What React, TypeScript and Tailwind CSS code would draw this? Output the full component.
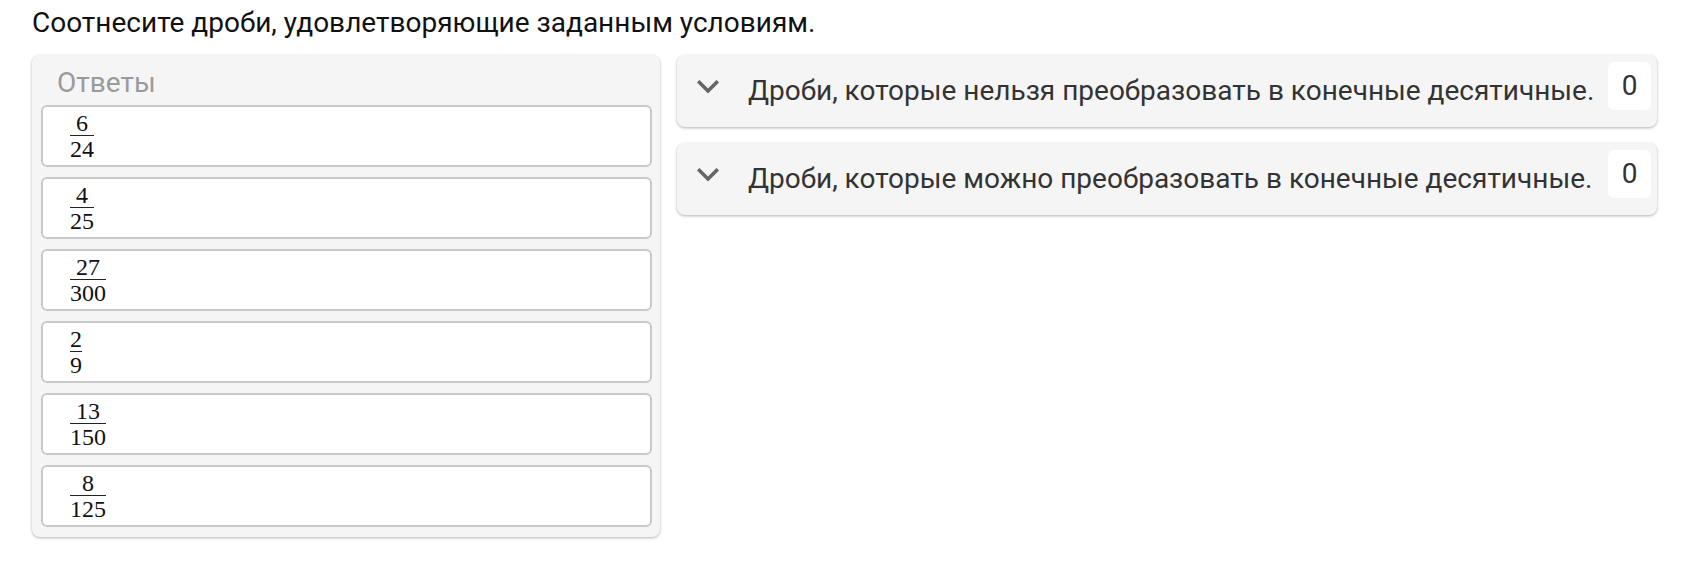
import React from 'react';

interface Fraction {
  num: string;
  den: string;
}

const answers: Fraction[] = [
  { num: '6', den: '24' },
  { num: '4', den: '25' },
  { num: '27', den: '300' },
  { num: '2', den: '9' },
  { num: '13', den: '150' },
  { num: '8', den: '125' },
];

const categories = [
  'Дроби, которые нельзя преобразовать в конечные десятичные.',
  'Дроби, которые можно преобразовать в конечные десятичные.',
];

const Frac: React.FC<Fraction> = ({ num, den }) => (
  <div className="inline-flex flex-col items-stretch text-center text-[24px] leading-[24px] text-[#111]" style={{ fontFamily: '"Liberation Serif", "DejaVu Serif", serif' }}>
    <span>{num}</span>
    <span className="h-px bg-[#222]" />
    <span className="mt-px">{den}</span>
  </div>
);

const Chevron = () => (
  <svg width="22" height="14" viewBox="0 0 22 14" className="shrink-0">
    <path d="M2.5 2.5 L11 11 L19.5 2.5" fill="none" stroke="#666" strokeWidth="3.6" strokeLinecap="square" />
  </svg>
);

export default function App() {
  return (
    <div className="min-h-screen bg-white pl-8 pr-[27px] pt-[7px]" style={{ fontFamily: 'Roboto, "Noto Sans", sans-serif' }}>
      <h1 className="text-[28px] leading-[32px] text-[#111] font-normal">Соотнесите дроби, удовлетворяющие заданным условиям.</h1>
      <div className="mt-[16px] flex items-start gap-[17px]">
        <div className="w-[628px] shrink-0 rounded-lg bg-[#f5f5f5] pl-[9px] pr-2 pb-[10px] shadow-[0_1px_3px_rgba(0,0,0,0.3)]">
          <div className="pl-4 pt-[12px] pb-[6px] text-[28px] leading-[32px] text-[#9a9a9a]">Ответы</div>
          <div className="flex flex-col gap-[10px]">
            {answers.map((f, i) => (
              <div key={i} className="flex h-[62px] items-center rounded-md border-2 border-[#c9c9c9] bg-white pl-[27px]">
                <Frac num={f.num} den={f.den} />
              </div>
            ))}
          </div>
        </div>
        <div className="flex flex-1 flex-col gap-4">
          {categories.map((c, i) => (
            <div key={i} className="flex h-[72px] items-start rounded-lg bg-[#f5f5f5] pl-5 pr-[6px] shadow-[0_1px_3px_rgba(0,0,0,0.3)]">
              <div className="pt-[25px]">
                <Chevron />
              </div>
              <div className="ml-[29px] flex-1 pt-[20px] text-[28px] leading-[32px] text-[#333]">{c}</div>
              <div className="mt-[7px] flex h-[48px] w-[43px] items-start justify-center rounded-md bg-white pt-[8px] text-[28px] leading-[32px] text-[#333]">0</div>
            </div>
          ))}
        </div>
      </div>
    </div>
  );
}
